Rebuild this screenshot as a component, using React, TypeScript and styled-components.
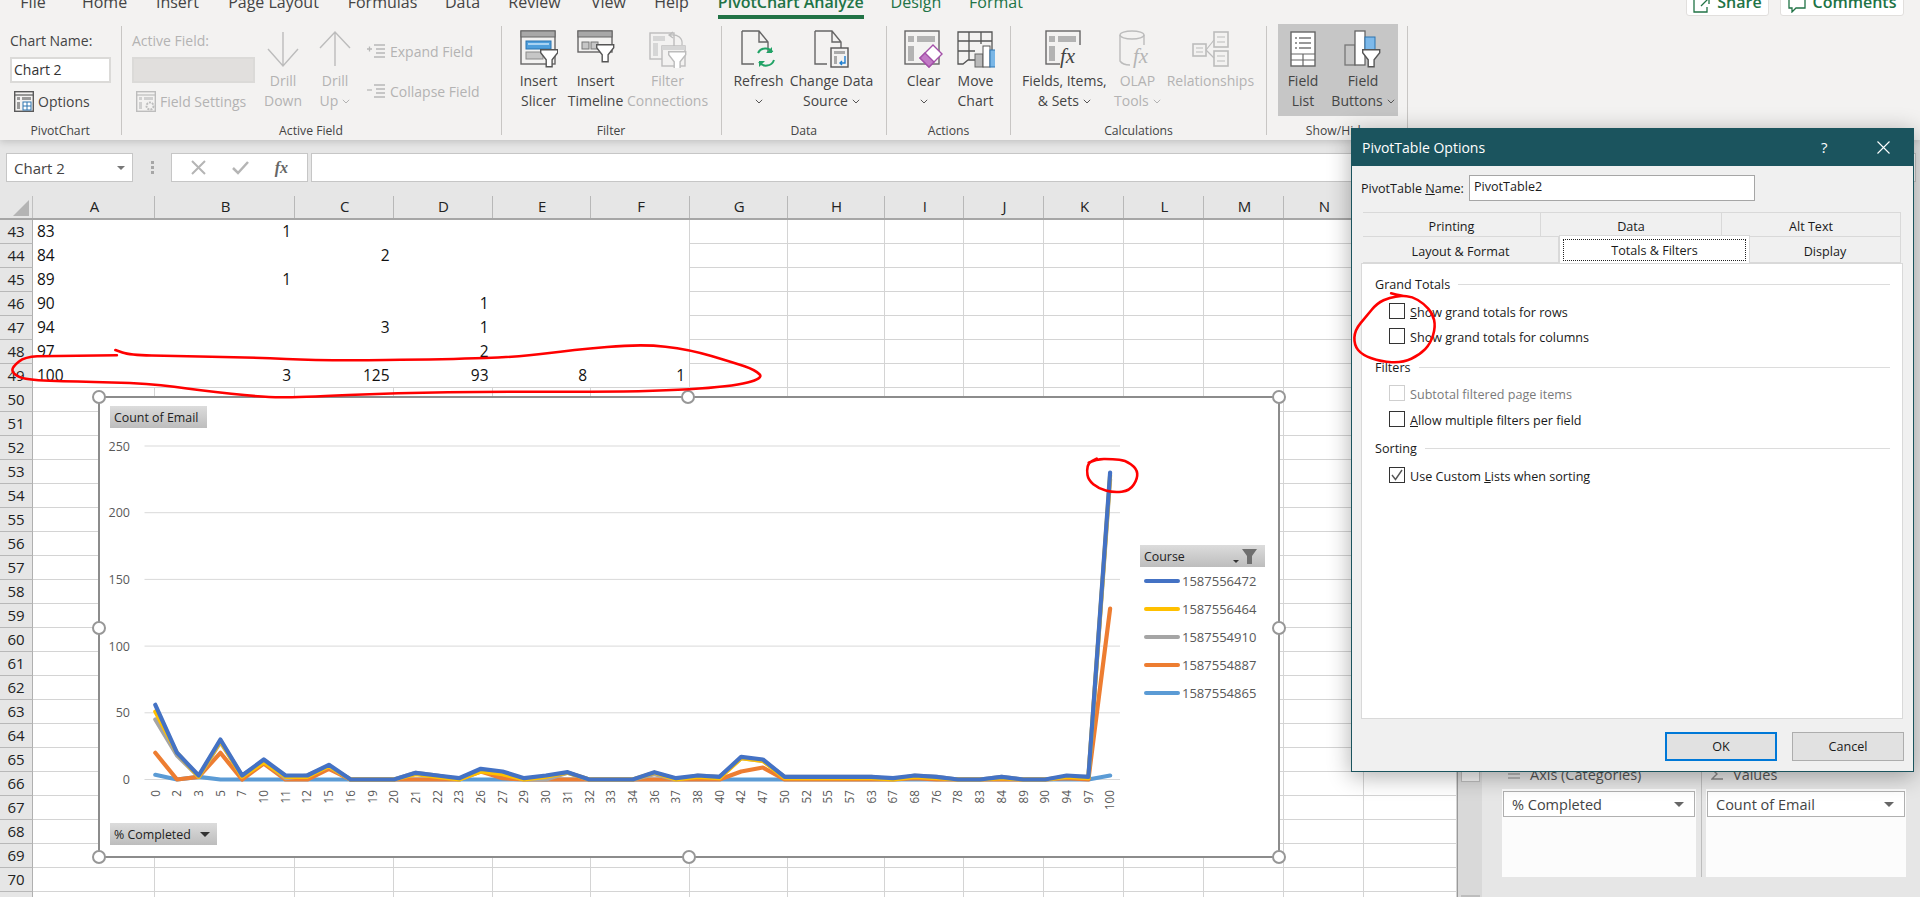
import React from "react";
import styled, { createGlobalStyle } from "styled-components";

const GlobalStyle = createGlobalStyle`
  html, body { margin: 0; padding: 0; background: #fff; overflow: hidden; }
  body { font-family: "Open Sans", "Noto Sans", "Liberation Sans", sans-serif; color: #222; }
  * { box-sizing: border-box; }
`;

const COLS = "33px 122px 140px 98.5px 99px 98.5px 99px 97.5px 97px 79.5px 80px 80px 80px 80px 80px 93px";

const Page = styled.div`
  position: relative; width: 1920px; height: 897px; overflow: hidden;
  display: flex; flex-direction: column; background: #e6e6e6;
`;

/* ---------- Ribbon ---------- */
const Ribbon = styled.header`
  height: 140px; flex: none; background: #f3f2f1; position: relative; z-index: 2;
  box-shadow: 0 2px 7px rgba(0,0,0,.16); color: #444;
`;
const TabStrip = styled.nav`
  height: 19px; margin-bottom: 7px; display: flex; align-items: flex-end; padding-left: 21px;
`;
const TabItem = styled.div<{ $w: number; $gap: number; $active?: boolean; $ctx?: boolean }>`
  width: ${(p) => p.$w}px; margin-right: ${(p) => p.$gap}px; flex: none; text-align: center;
  white-space: nowrap; font-size: 16px; line-height: 22px; padding-bottom: 2px;
  display: flex; justify-content: center;
  border-bottom: 4px solid ${(p) => (p.$active ? "#217346" : "transparent")};
  color: ${(p) => (p.$ctx || p.$active ? "#217346" : "#444")};
  font-weight: ${(p) => (p.$active ? 600 : 400)};
`;
const ShareGroup = styled.div`
  position: absolute; right: 16px; top: -14px; display: flex; gap: 11px;
`;
const ShareBtn = styled.div<{ $w: number }>`
  width: ${(p) => p.$w}px; height: 30px; background: #fff; border: 1px solid #e1dfdd; border-radius: 3px;
  color: #217346; font-size: 16px; font-weight: 600; display: flex; align-items: flex-end; justify-content: center;
  gap: 7px; line-height: 22px; padding-bottom: 2px; white-space: nowrap;
`;
const Groups = styled.div`display: flex; height: 109px;`;
const Group = styled.section<{ $w: number; $last?: boolean }>`
  width: ${(p) => p.$w}px; flex: none; height: 109px; display: flex; flex-direction: column;
  border-right: 1px solid #c8c6c4;
`;
const GroupBody = styled.div<{ $pad?: number }>`
  flex: 1; display: flex; min-height: 0; padding-left: ${(p) => p.$pad ?? 0}px;
`;
const GroupLabel = styled.div`
  height: 18px; margin-bottom: -5px; line-height: 18px; font-size: 12.2px; text-align: center; color: #444;
`;
const Stack = styled.div<{ $w?: number; $pad?: number }>`
  display: flex; flex-direction: column; padding-top: 5px; flex: none;
  ${(p) => (p.$w ? `width:${p.$w}px;` : "")} padding-left: ${(p) => p.$pad ?? 0}px;
`;
const FieldLabel = styled.div<{ $off?: boolean }>`
  font-size: 14px; line-height: 20px; color: ${(p) => (p.$off ? "#b3b3b3" : "#444")}; white-space: nowrap;
`;
const NameInput = styled.div<{ $off?: boolean; $w: number }>`
  width: ${(p) => p.$w}px; height: 26px; margin-top: 6px; border: 2px solid #dbdad8;
  background: ${(p) => (p.$off ? "#e1dfdd" : "#fff")}; font-size: 14px; line-height: 22px; padding-left: 2px; color: #333;
`;
const InlineBtn = styled.div<{ $off?: boolean; $left?: number }>`
  display: flex; align-items: center; gap: 4px; height: 20px; margin-top: 8px; margin-left: ${(p) => p.$left ?? 0}px;
  font-size: 14px; white-space: nowrap; color: ${(p) => (p.$off ? "#b3b3b3" : "#444")};
`;
const LargeBtn = styled.div<{ $w: number; $off?: boolean }>`
  width: ${(p) => p.$w}px; flex: none; display: flex; flex-direction: column; align-items: center;
  font-size: 14px; line-height: 20px; color: ${(p) => (p.$off ? "#b3b3b3" : "#444")}; white-space: nowrap;
`;
const IconSlot = styled.div`height: 45px; display: flex; align-items: center; justify-content: center; flex: none;`;
const BtnLine = styled.div`height: 20px; display: flex; align-items: center; gap: 4px;`;
const SideColumn = styled.div`
  display: flex; flex-direction: column; gap: 20px; padding: 15px 0 0 6px; font-size: 14px; color: #b3b3b3; flex: none;
`;
const SideItem = styled.div`display: flex; align-items: center; height: 20px; gap: 5px; white-space: nowrap;`;
const PressedSet = styled.div`
  display: flex; width: 120px; height: 92px; margin: -2px 0 0 11px; padding-top: 2px; background: #c6c6c6; flex: none;
`;

/* ---------- Formula bar ---------- */
const FormulaBar = styled.div`
  height: 56px; flex: none; display: flex; padding: 13px 4px 0 6px; background: #e6e6e6;
`;
const NameBox = styled.div`
  width: 127px; height: 29px; background: #fff; border: 1px solid #c6c6c6; display: flex; align-items: center;
  justify-content: space-between; padding: 0 7px; font-size: 15px; color: #444;
`;
const Grip = styled.div`
  width: 38px; height: 29px; display: flex; flex-direction: column; align-items: center; justify-content: center; gap: 2px;
  span { width: 3px; height: 3px; background: #a6a6a6; }
`;
const FxGroup = styled.div`
  width: 137px; height: 29px; background: #fff; border: 1px solid #c6c6c6; display: flex; align-items: center;
  justify-content: space-around; padding: 0 6px;
`;
const FxText = styled.span`font-family: "Liberation Serif", serif; font-style: italic; font-weight: 700; font-size: 16px; color: #666;`;
const FormulaInput = styled.div`flex: 1; height: 29px; margin-left: 3px; background: #fff; border: 1px solid #c6c6c6;`;

/* ---------- Sheet ---------- */
const Workspace = styled.div`flex: 1; min-height: 0; display: flex;`;
const Sheet = styled.div`width: 1457px; flex: none; background: #fff; overflow: hidden;`;
const HeaderRow = styled.div`
  display: grid; grid-template-columns: ${COLS}; height: 22px; background: #e6e6e6; border-bottom: 2px solid #a6a6a6; box-sizing: content-box;
`;
const Corner = styled.div`
  position: relative; border-right: 1px solid #c0c0c0;
  &::after { content: ""; position: absolute; right: 3px; bottom: 2px; border-style: solid; border-width: 0 0 16px 16px; border-color: transparent transparent #b4b4b4 transparent; }
`;
const ColHead = styled.div`
  border-right: 1px solid #b8b8b8; text-align: center; font-size: 15px; line-height: 20px; color: #222; padding-left: 2px;
`;
const SheetRow = styled.div`display: grid; grid-template-columns: ${COLS}; height: 24px;`;
const RowHead = styled.div`
  background: #e6e6e6; border-right: 1px solid #b0b0b0; border-bottom: 1px solid #b8b8b8; text-align: center;
  font-size: 15px; line-height: 22px; color: #222;
`;
const Cell = styled.div<{ $bare?: boolean; $line?: boolean; $num?: boolean; $edge?: boolean }>`
  border-right: ${(p) => (p.$bare && !p.$edge ? "none" : "1px solid #d4d4d4")};
  border-bottom: ${(p) => (p.$bare && !p.$line ? "none" : "1px solid #d4d4d4")};
  font-size: 15.5px; line-height: 22px; color: #111;
  padding: 0 4px; text-align: ${(p) => (p.$num ? "right" : "left")};
`;

/* ---------- Right side ---------- */
const ScrollTrack = styled.div`
  width: 25px; flex: none; background: #d9d9d9; border-left: 1px solid #9a9a9a;
  display: flex; flex-direction: column; align-items: center; justify-content: flex-end; padding-bottom: 0;
`;
const Thumb = styled.div<{ $h: number; $mb: number }>`
  width: 19px; height: ${(p) => p.$h}px; margin-bottom: ${(p) => p.$mb}px; background: #f4f4f4; border: 1px solid #bdbdbd; flex: none;
`;
const FieldPane = styled.aside`
  flex: 1; background: #e6e6e6; display: flex; align-items: flex-end; padding: 0 14px 20px 20px; gap: 10px;
`;
const Zone = styled.div<{ $w: number; $rule?: boolean }>`
  width: ${(p) => p.$w}px; flex: none; position: relative;
  ${(p) => (p.$rule ? "&::after{content:'';position:absolute;right:-6px;top:0;bottom:0;width:1px;background:#bdbdbd;}" : "")}
`;
const ZoneHead = styled.div`
  height: 23px; display: flex; align-items: center; gap: 9px; padding: 0 0 7px 5px; font-size: 14.5px; color: #555; white-space: nowrap;
`;
const ZoneBox = styled.div`height: 88px; background: #fcfcfc; padding: 2px 1px;`;
const PaneSelect = styled.div`
  height: 26px; border: 1px solid #b0b0b0; background: #fff; display: flex; align-items: center; justify-content: space-between;
  padding: 0 10px 0 8px; font-size: 14.5px; color: #444;
`;
const Caret = styled.span<{ $c?: string; $s?: number }>`
  width: 0; height: 0; border-style: solid; flex: none;
  border-width: ${(p) => p.$s ?? 5}px ${(p) => p.$s ?? 5}px 0 ${(p) => p.$s ?? 5}px;
  border-color: ${(p) => p.$c ?? "#666"} transparent transparent transparent;
`;

/* ---------- Chart ---------- */
const ChartFrame = styled.div`
  position: absolute; left: 98px; top: 396px; width: 1182px; height: 462px; background: #fff; border: 2px solid #8c8c8c; z-index: 1;
`;
const ChartSvg = styled.svg`
  position: absolute; left: -1px; top: -1px; width: 1180px; height: 460px;
  text { font-family: "Open Sans", sans-serif; }
`;
const PivotButton = styled.div<{ $x: number; $y: number; $w: number }>`
  position: absolute; left: ${(p) => p.$x}px; top: ${(p) => p.$y}px; width: ${(p) => p.$w}px; height: 22px;
  background: linear-gradient(#dcdcdc, #bdbdbd); display: flex; align-items: center; justify-content: space-between;
  padding: 0 7px 0 4px; font-size: 12.4px; color: #222; white-space: nowrap;
`;
const Legend = styled.div`position: absolute; left: 1040px; top: 147px; width: 125px;`;
const LegendHead = styled.div`
  height: 22px; background: linear-gradient(#dcdcdc, #bdbdbd); display: flex; align-items: center; padding: 0 4px;
  font-size: 12.4px; color: #222; justify-content: space-between;
`;
const LegendRow = styled.div`display: flex; align-items: center; height: 28px; padding-left: 4px; gap: 2px; font-size: 13px; color: #595959;`;
const Swatch = styled.span<{ $c: string }>`width: 36px; height: 4px; border-radius: 2px; background: ${(p) => p.$c}; flex: none;`;
const Handle = styled.span<{ $x: number; $y: number }>`
  position: absolute; left: ${(p) => p.$x - 7}px; top: ${(p) => p.$y - 7}px; width: 14px; height: 14px; border-radius: 50%;
  background: #fff; border: 2.5px solid #979797; z-index: 1;
`;
const RedInk = styled.svg`position: absolute; left: 0; top: 0; width: 1920px; height: 897px; pointer-events: none; z-index: 5;`;

/* ---------- Dialog ---------- */
const Dialog = styled.div`
  position: absolute; left: 1351px; top: 128px; width: 563px; height: 644px; z-index: 4; background: #f0f0f0;
  border: 1px solid #1b545e; border-top: none; box-shadow: 0 4px 22px rgba(0,0,0,.32); display: flex; flex-direction: column;
  font-size: 12.6px; color: #1a1a1a;
`;
const TitleBar = styled.div`
  height: 38px; flex: none; background: #1b545e; color: #fff; display: flex; align-items: center; padding: 0 23px 0 10px; font-size: 14px;
`;
const TitleText = styled.div`flex: 1;`;
const TitleHelp = styled.div`width: 56px; font-size: 15px;`;
const NameRow = styled.div`display: flex; align-items: center; height: 26px; margin: 9px 0 11px 9px; flex: none;`;
const NameLabel = styled.div`width: 108px; flex: none; white-space: nowrap;`;
const NameField = styled.div`
  width: 286px; height: 26px; background: #fff; border: 1px solid #a6a6a6; padding-left: 4px; line-height: 22px;
`;
const TabRow = styled.div<{ $cols: string; $h: number }>`
  display: grid; grid-template-columns: ${(p) => p.$cols}; height: ${(p) => p.$h}px; margin-left: 11px; width: 538px; flex: none;
`;
const DTab = styled.div<{ $top?: boolean }>`
  display: flex; align-items: center; justify-content: center; border-right: 1px solid #d9d9d9; padding-top: 4px;
  ${(p) => (p.$top ? "border-top: 1px solid #d9d9d9;" : "")} border-bottom: 1px solid #d9d9d9;
`;
const ActiveTab = styled.div`
  height: 28px; margin-top: -2px; position: relative; z-index: 1; background: #fff; border: 1px solid #d9d9d9; border-bottom: none;
  padding: 3px 3px 2px; display: flex;
`;
const FocusRing = styled.div`
  flex: 1; border: 1px dotted #222; display: flex; align-items: center; justify-content: center;
`;
const Panel = styled.div`
  width: 542px; height: 456px; margin-left: 9px; flex: none; background: #fff; border: 1px solid #d9d9d9; padding: 0 12px 0 13px;
`;
const SectionHead = styled.div<{ $mt: number }>`
  display: flex; align-items: center; gap: 8px; height: 18px; margin-top: ${(p) => p.$mt}px;
  &::after { content: ""; flex: 1; height: 1px; background: #dcdcdc; }
`;
const CheckRow = styled.div<{ $mt: number; $off?: boolean }>`
  display: flex; align-items: center; gap: 5px; height: 16px; margin: ${(p) => p.$mt}px 0 0 14px; white-space: nowrap;
  color: ${(p) => (p.$off ? "#7a7a7a" : "#1a1a1a")};
`;
const CheckText = styled.span`margin-top: 2px;`;
const CheckBox = styled.span<{ $off?: boolean }>`
  width: 16px; height: 16px; flex: none; border: 1px solid ${(p) => (p.$off ? "#cfcfcf" : "#333")}; background: #fff;
  display: flex; align-items: center; justify-content: center;
`;
const DialogButtons = styled.div`display: flex; justify-content: flex-end; gap: 15px; padding: 13px 9px 0 0;`;
const DButton = styled.div<{ $primary?: boolean }>`
  width: 112px; height: 29px; display: flex; align-items: center; justify-content: center; background: #e1e1e1;
  border: ${(p) => (p.$primary ? "2px solid #0078d7" : "1px solid #adadad")};
`;

/* ---------- Icon pieces ---------- */
const INK = "#666";
const OFF = "#bcbcbc";

const Chev = ({ c = "#555" }: { c?: string }) => (
  <svg width="8" height="5" viewBox="0 0 8 5"><path d="M.8.8 4 4l3.2-3.2" fill="none" stroke={c} strokeWidth="1" /></svg>
);
const Funnel = ({ x, y, c = "#555" }: { x: number; y: number; c?: string }) => (
  <path transform={`translate(${x} ${y})`} d="M.7.7h17v3l-5.6 7v7H6.2v-7L.7 3.7z" fill="#fff" stroke={c} strokeWidth="1.4" />
);
const Win = ({ c = INK, w = 34, h = 33 }: { c?: string; w?: number; h?: number }) => (
  <>
    <rect x="1" y="1" width={w} height={h} fill="none" stroke={c} strokeWidth="1.4" />
    <rect x="1" y="1" width={w} height="6" fill={c === INK ? "#a8a8a8" : "#dcdcdc"} stroke={c} strokeWidth="1" />
  </>
);
const SlicerIcon = () => (
  <svg width="38" height="38" viewBox="0 0 38 38">
    <Win />
    <rect x="6" y="11" width="25" height="8" fill="#4f9fdc" stroke="#2d74b0" />
    <rect x="8" y="13" width="21" height="2" fill="#a9d3f2" />
    <rect x="6" y="22" width="17" height="7" fill="#c6c6c6" stroke="#8a8a8a" />
    <Funnel x={20} y={19} />
  </svg>
);
const TimelineIcon = () => (
  <svg width="38" height="38" viewBox="0 0 38 38">
    <Win h={21} />
    <rect x="5" y="12" width="7" height="7" fill="#c6c6c6" stroke="#777" />
    <rect x="14" y="12" width="7" height="7" fill="#c6c6c6" stroke="#777" />
    <Funnel x={19} y={14} />
  </svg>
);
const ConnIcon = () => (
  <svg width="38" height="38" viewBox="0 0 38 38">
    <rect x="1" y="3" width="24" height="26" fill="none" stroke={OFF} strokeWidth="1.4" />
    <rect x="4" y="6" width="12" height="5" fill="#d6d6d6" />
    <rect x="4" y="13" width="5" height="13" fill="#d6d6d6" />
    <path d="M24 2l-4 3 4 3M21 5c8-1 13 3 12 10" fill="none" stroke={OFF} strokeWidth="1.3" />
    <rect x="13" y="16" width="23" height="20" fill="#f3f2f1" stroke={OFF} strokeWidth="1.4" />
    <rect x="13" y="16" width="23" height="4" fill="#d6d6d6" />
    <Funnel x={19} y={21} c={OFF} />
  </svg>
);
const DocOutline = () => (
  <path d="M1 1h17l9 11v11M13 34H1V1M18 1v11h9" fill="none" stroke={INK} strokeWidth="1.4" />
);
const RefreshIcon = () => (
  <svg width="36" height="38" viewBox="0 0 36 38">
    <DocOutline />
    <path d="M17 23a8.500 8.500 0 0 1 14.500-1M33 30a8.500 8.500 0 0 1-15 2" fill="none" stroke="#21a366" strokeWidth="2" />
    <path d="M31 17v6h-6zM18 37v-6h6z" fill="#21a366" />
  </svg>
);
const SourceIcon = () => (
  <svg width="36" height="38" viewBox="0 0 36 38">
    <DocOutline />
    <rect x="17" y="18" width="17" height="19" fill="#f3f2f1" stroke="#555" strokeWidth="1.4" />
    <rect x="20" y="21" width="11" height="3" fill="#aaa" />
    <rect x="20" y="26" width="3" height="8" fill="#aaa" />
    <path d="M31 26v7h-5m2-2-2 2 2 2" fill="none" stroke="#1f7fd0" strokeWidth="1.4" />
  </svg>
);
const ClearIcon = () => (
  <svg width="40" height="38" viewBox="0 0 40 38">
    <rect x="1" y="1" width="34" height="33" fill="none" stroke={INK} strokeWidth="1.4" />
    <rect x="4" y="6" width="6" height="6" fill="#b3b3b3" />
    <rect x="13" y="6" width="18" height="6" fill="#b3b3b3" />
    <rect x="4" y="16" width="6" height="15" fill="#b3b3b3" />
    <path d="M29 15l9 9-13 13-9-9z" fill="#fff" stroke="#a34fa8" strokeWidth="1.4" />
    <path d="M21 23l9 9-5 5-9-9z" fill="#c27ac6" stroke="#a34fa8" strokeWidth="1.4" />
  </svg>
);
const MoveIcon = () => (
  <svg width="38" height="38" viewBox="0 0 38 38">
    <path d="M1 2h34v28H11l-5 4H1zM1 11h34M1 21h17M12 2v28M24 2v12" fill="none" stroke="#555" strokeWidth="1.3" />
    <rect x="18" y="24" width="8" height="13" fill="#b9b9b9" stroke="#666" />
    <rect x="26" y="16" width="7" height="21" fill="#fff" stroke="#555" />
    <rect x="33" y="20" width="6" height="17" fill="#79b6e6" stroke="#2d74b0" />
  </svg>
);
const FieldsIcon = () => (
  <svg width="38" height="38" viewBox="0 0 38 38">
    <rect x="1" y="1" width="34" height="33" fill="none" stroke={INK} strokeWidth="1.4" />
    <rect x="4" y="6" width="6" height="6" fill="#b3b3b3" />
    <rect x="13" y="6" width="18" height="6" fill="#b3b3b3" />
    <rect x="4" y="16" width="6" height="15" fill="#b3b3b3" />
    <rect x="15" y="15" width="22" height="21" fill="#f3f2f1" />
    <text x="15" y="33" fontSize="21" fontStyle="italic" fill="#444" style={{ fontFamily: "Liberation Serif, serif" }}>fx</text>
  </svg>
);
const OlapIcon = () => (
  <svg width="38" height="38" viewBox="0 0 38 38">
    <ellipse cx="14" cy="5" rx="12" ry="4" fill="none" stroke={OFF} strokeWidth="1.4" />
    <path d="M2 5v26c2 3 6 4 10 4M26 5v10" fill="none" stroke={OFF} strokeWidth="1.4" />
    <text x="15" y="33" fontSize="21" fontStyle="italic" fill="#b5b5b5" style={{ fontFamily: "Liberation Serif, serif" }}>fx</text>
  </svg>
);
const RelIcon = () => (
  <svg width="38" height="36" viewBox="0 0 38 36">
    <rect x="2" y="13" width="13" height="12" fill="none" stroke={OFF} strokeWidth="1.6" />
    <rect x="23" y="1" width="14" height="15" fill="none" stroke={OFF} strokeWidth="1.6" />
    <rect x="23" y="20" width="14" height="15" fill="none" stroke={OFF} strokeWidth="1.6" />
    <path d="M5 17h7M5 21h7M26 6h8M26 11h8M26 25h8M26 30h8M15 19l8-10M15 19l8 8" stroke={OFF} strokeWidth="1.2" fill="none" />
  </svg>
);
const FieldListIcon = () => (
  <svg width="26" height="36" viewBox="0 0 26 36">
    <rect x="1" y="1" width="24" height="34" fill="#fff" stroke="#666" strokeWidth="1.4" />
    <path d="M5 7h2M9 7h12M5 12h2M9 12h12M5 17h2M9 17h12" stroke="#777" strokeWidth="1.3" />
    <path d="M1 23h24M1 29h24M13 23v12" stroke="#666" strokeWidth="1.2" />
  </svg>
);
const FieldBtnIcon = () => (
  <svg width="38" height="38" viewBox="0 0 38 38">
    <rect x="1" y="15" width="10" height="20" fill="none" stroke="#777" strokeWidth="1.3" />
    <rect x="11" y="1" width="10" height="34" fill="#fff" stroke="#666" strokeWidth="1.3" />
    <rect x="21" y="7" width="10" height="15" fill="#7db9ea" stroke="#2d74b0" />
    <Funnel x={18} y={19} />
  </svg>
);
const OptionsIcon = ({ off }: { off?: boolean }) => {
  const c = off ? "#bdbdbd" : "#5a5a5a";
  return (
    <svg width="20" height="21" viewBox="0 0 20 21">
      <rect x=".7" y=".7" width="18.600" height="19.600" fill="none" stroke={c} strokeWidth="1.4" />
      <path d="M.7 4h18.600" stroke={c} strokeWidth="1.2" />
      <rect x="3" y="6" width="3" height="3" fill={off ? "#d0d0d0" : "#9a9a9a"} />
      <rect x="8" y="6" width="9" height="3" fill={off ? "#d0d0d0" : "#9a9a9a"} />
      <rect x="3" y="11" width="3" height="7" fill={off ? "#d0d0d0" : "#9a9a9a"} />
      {off ? (
        <circle cx="14" cy="15" r="3.500" fill="none" stroke={c} strokeWidth="2" strokeDasharray="2 1" />
      ) : (
        <>
          <rect x="9" y="11" width="8" height="8" fill="#fff" stroke="#2d74b0" />
          <path d="M9 15h8M13 11v8" stroke="#2d74b0" />
        </>
      )}
    </svg>
  );
};
const DrillDown = () => (
  <svg width="34" height="38" viewBox="0 0 34 38"><path d="M17 2v34M2 19l15 17 15-17" fill="none" stroke={OFF} strokeWidth="1.4" /></svg>
);
const DrillUp = () => (
  <svg width="34" height="38" viewBox="0 0 34 38"><path d="M17 36V2M2 18 17 2l15 16" fill="none" stroke={OFF} strokeWidth="1.4" /></svg>
);
const TreeIcon = ({ plus }: { plus?: boolean }) => (
  <svg width="18" height="15" viewBox="0 0 18 15">
    <path d={plus ? "M0 5h5M2.500 2.500v5" : "M0 6h5"} stroke="#b8b8b8" strokeWidth="1.300" fill="none" />
    <path d="M7 1h11M9 5h9M9 9h9M7 13h11" stroke="#b8b8b8" strokeWidth="1.300" />
  </svg>
);
const ShareIcon = () => (
  <svg width="17" height="16" viewBox="0 0 17 16"><path d="M7 1H1v14h13v-5M10 1h6v6M16 1 8 9" fill="none" stroke="#217346" strokeWidth="1.300" /></svg>
);
const CommentIcon = () => (
  <svg width="18" height="16" viewBox="0 0 18 16"><path d="M1 1h16v10H8l-4 4v-4H1z" fill="none" stroke="#217346" strokeWidth="1.300" /></svg>
);
const CrossGlyph = () => (
  <svg width="15" height="15" viewBox="0 0 15 15"><path d="M1 1l13 13M14 1 1 14" stroke="#b5b5b5" strokeWidth="2" /></svg>
);
const CheckGlyph = () => (
  <svg width="17" height="15" viewBox="0 0 17 15"><path d="M1 8l5 5L16 2" fill="none" stroke="#b5b5b5" strokeWidth="2.500" /></svg>
);
const CloseGlyph = () => (
  <svg width="13" height="13" viewBox="0 0 13 13"><path d="M.5.500l12 12M12.500.500l-12 12" stroke="#fff" strokeWidth="1.100" /></svg>
);
const TickGlyph = () => (
  <svg width="12" height="12" viewBox="0 0 12 12"><path d="M1 6l3.500 4.500L11 1" fill="none" stroke="#555" strokeWidth="1.400" /></svg>
);
const LegendFilter = () => (
  <svg width="28" height="17" viewBox="0 0 28 17">
    <path d="M0 12h6l-3 3z" fill="#333" />
    <path d="M9 1h15l-5 7v8h-5V8z" fill="#6f6f6f" />
  </svg>
);

/* ---------- Data ---------- */
const TABS: [string, number, number, boolean?, boolean?][] = [
  ["File", 24, 37], ["Home", 45, 29], ["Insert", 43, 28], ["Page Layout", 93, 28], ["Formulas", 69, 28],
  ["Data", 35, 28], ["Review", 53, 30], ["View", 35, 29], ["Help", 33, 29.5],
  ["PivotChart Analyze", 146.5, 26.5, true, true], ["Design", 51, 28, false, true], ["Format", 53, 0, false, true],
];
const COL_LETTERS = "ABCDEFGHIJKLMNO".split("");
const PIVOT: Record<number, (string | number)[]> = {
  43: ["83", 1], 44: ["84", "", 2], 45: ["89", 1], 46: ["90", "", "", 1], 47: ["94", "", 3, 1],
  48: ["97", "", "", 2], 49: ["100", 3, 125, 93, 8, 1],
};
const ROWS = Array.from({ length: 29 }, (_, i) => 43 + i);
const CATS = [0,2,3,5,7,10,11,12,15,16,19,20,21,22,23,26,27,29,30,31,32,33,34,36,37,38,40,42,47,50,52,55,57,63,67,68,76,78,83,84,89,90,94,97,100];
const BLUE = [56,20,3,30,3,15,3,3,11,0,0,0,5,3,1,8,6,1,3,5.5,0,0,0,5.5,1,3,2,17,15,2,2,2,2,2,1,3,2,0,0,2,0,0,3,2,230];
const ORANGE = [20,0,2,20,0,12,0,0,8,0,0,0,0,0,0,6,1,0,0,0,0,0,0,0,0,0,0,6,9,0,0,0,0,0,0,1,0,0,0,0,0,0,1,0,128];
const SKY = [3.5,0,2,0,0,0,0,0,0,0,0,0,0,0,0,0,0,0,0,0,0,0,0,0,0,0,0,0,0,0,0,0,0,0,0,0,0,0,0,0,0,0,0,0,3];
const GRAY = [45,18,2,28,3,14,1,3,10,0,0,0,5,3,0,7,5,0,0,5,0,0,0,4,0,3,2,16,14,2,2,2,2,2,0,3,2,0,0,2,0,0,2,2,225];
const YELLOW = [51,20,2,29,2,13,2,2,10,0,0,0,4,2,0,6,4,0,2,5,0,0,0,5,0,2,1,16,14,1,1,1,1,1,0,2,1,0,0,1,0,0,2,1,228];
const SERIES: [string, number[]][] = [["#5b9bd5", SKY], ["#ed7d31", ORANGE], ["#a5a5a5", GRAY], ["#ffc000", YELLOW], ["#4472c4", BLUE]];
const LEGEND: [string, string][] = [["#4472c4", "1587556472"], ["#ffc000", "1587556464"], ["#a5a5a5", "1587554910"], ["#ed7d31", "1587554887"], ["#5b9bd5", "1587554865"]];

const catX = (i: number) => 155.3 + i * 21.7;
const valY = (v: number) => 779.5 - v * 1.334;
const linePts = (vals: number[]) => vals.map((v, i) => `${catX(i).toFixed(1)},${valY(v).toFixed(1)}`).join(" ");

const smooth = (pts: number[][], ox: number, oy: number, sx: number, sy: number) => {
  const p = pts.map(([x, y]) => [ox + x / sx, oy + y / sy]);
  let d = `M${p[0][0].toFixed(1)} ${p[0][1].toFixed(1)}`;
  for (let i = 1; i < p.length - 1; i++) {
    const mx = (p[i][0] + p[i + 1][0]) / 2;
    const my = (p[i][1] + p[i + 1][1]) / 2;
    d += `Q${p[i][0].toFixed(1)} ${p[i][1].toFixed(1)} ${mx.toFixed(1)} ${my.toFixed(1)}`;
  }
  const l = p[p.length - 1];
  return d + `L${l[0].toFixed(1)} ${l[1].toFixed(1)}`;
};
const INK_ROW = smooth(
  [[235,556],[100,558],[50,560],[25,590],[25,610],[50,630],[150,635],[300,640],[400,660],[530,682],[600,682],[800,668],[1000,665],[1300,665],[1470,650],[1535,625],[1518,600],[1475,578],[1385,538],[1290,522],[1150,540],[1050,560],[900,568],[650,572],[500,562],[350,558],[260,555],[232,540]],
  0, 170, 2.01, 3);
const INK_BOX = smooth(
  [[138,40],[165,48],[195,50],[225,70],[250,100],[258,140],[245,190],[215,225],[170,248],[110,245],[60,225],[38,195],[40,150],[70,110],[100,70],[135,52],[165,48]],
  1340, 280, 2.7, 3);
const INK_PEAK = smooth(
  [[56,38],[80,26],[130,28],[165,30],[200,55],[203,85],[180,122],[130,128],[85,115],[55,90],[50,60],[56,38],[80,26]],
  1070, 450, 3, 3);

const HANDLES: [number, number][] = [[99,397],[688,397],[1279,397],[99,628],[1279,628],[99,857],[689,857],[1279,857]];

export default function App() {
  return (
    <Page>
      <GlobalStyle />
      <Ribbon>
        <TabStrip>
          {TABS.map(([t, w, g, a, c]) => (
            <TabItem key={t} $w={w} $gap={g} $active={a} $ctx={c}>{t}</TabItem>
          ))}
        </TabStrip>
        <ShareGroup>
          <ShareBtn $w={83}><ShareIcon />Share</ShareBtn>
          <ShareBtn $w={124}><CommentIcon />Comments</ShareBtn>
        </ShareGroup>
        <Groups>
          <Group $w={121.5}>
            <GroupBody>
              <Stack $pad={10}>
                <FieldLabel>Chart Name:</FieldLabel>
                <NameInput $w={101}>Chart 2</NameInput>
                <InlineBtn $left={4}><OptionsIcon />Options</InlineBtn>
              </Stack>
            </GroupBody>
            <GroupLabel>PivotChart</GroupLabel>
          </Group>
          <Group $w={380}>
            <GroupBody $pad={10.5}>
              <Stack $w={125}>
                <FieldLabel $off>Active Field:</FieldLabel>
                <NameInput $off $w={123} />
                <InlineBtn $off $left={4}><OptionsIcon off />Field Settings</InlineBtn>
              </Stack>
              <LargeBtn $w={52} $off>
                <IconSlot><DrillDown /></IconSlot>
                <BtnLine>Drill</BtnLine>
                <BtnLine>Down</BtnLine>
              </LargeBtn>
              <LargeBtn $w={52} $off>
                <IconSlot><DrillUp /></IconSlot>
                <BtnLine>Drill</BtnLine>
                <BtnLine>Up <Chev c="#b3b3b3" /></BtnLine>
              </LargeBtn>
              <SideColumn>
                <SideItem><TreeIcon plus />Expand Field</SideItem>
                <SideItem><TreeIcon />Collapse Field</SideItem>
              </SideColumn>
            </GroupBody>
            <GroupLabel>Active Field</GroupLabel>
          </Group>
          <Group $w={220}>
            <GroupBody $pad={8}>
              <LargeBtn $w={58}><IconSlot><SlicerIcon /></IconSlot><BtnLine>Insert</BtnLine><BtnLine>Slicer</BtnLine></LargeBtn>
              <LargeBtn $w={56}><IconSlot><TimelineIcon /></IconSlot><BtnLine>Insert</BtnLine><BtnLine>Timeline</BtnLine></LargeBtn>
              <LargeBtn $w={88} $off><IconSlot><ConnIcon /></IconSlot><BtnLine>Filter</BtnLine><BtnLine>Connections</BtnLine></LargeBtn>
            </GroupBody>
            <GroupLabel>Filter</GroupLabel>
          </Group>
          <Group $w={165.5}>
            <GroupBody $pad={4}>
              <LargeBtn $w={66}><IconSlot><RefreshIcon /></IconSlot><BtnLine>Refresh</BtnLine><BtnLine><Chev /></BtnLine></LargeBtn>
              <LargeBtn $w={80}><IconSlot><SourceIcon /></IconSlot><BtnLine>Change Data</BtnLine><BtnLine>Source <Chev /></BtnLine></LargeBtn>
            </GroupBody>
            <GroupLabel>Data</GroupLabel>
          </Group>
          <Group $w={124}>
            <GroupBody $pad={10.5}>
              <LargeBtn $w={52}><IconSlot><ClearIcon /></IconSlot><BtnLine>Clear</BtnLine><BtnLine><Chev /></BtnLine></LargeBtn>
              <LargeBtn $w={52}><IconSlot><MoveIcon /></IconSlot><BtnLine>Move</BtnLine><BtnLine>Chart</BtnLine></LargeBtn>
            </GroupBody>
            <GroupLabel>Actions</GroupLabel>
          </Group>
          <Group $w={256}>
            <GroupBody $pad={3.4}>
              <LargeBtn $w={100}><IconSlot><FieldsIcon /></IconSlot><BtnLine>Fields, Items,</BtnLine><BtnLine>&amp; Sets <Chev /></BtnLine></LargeBtn>
              <LargeBtn $w={46} $off><IconSlot><OlapIcon /></IconSlot><BtnLine>OLAP</BtnLine><BtnLine>Tools <Chev c="#b3b3b3" /></BtnLine></LargeBtn>
              <LargeBtn $w={100} $off><IconSlot><RelIcon /></IconSlot><BtnLine>Relationships</BtnLine></LargeBtn>
            </GroupBody>
            <GroupLabel>Calculations</GroupLabel>
          </Group>
          <Group $w={140.5}>
            <GroupBody>
              <PressedSet>
                <LargeBtn $w={50}><IconSlot><FieldListIcon /></IconSlot><BtnLine>Field</BtnLine><BtnLine>List</BtnLine></LargeBtn>
                <LargeBtn $w={70}><IconSlot><FieldBtnIcon /></IconSlot><BtnLine>Field</BtnLine><BtnLine>Buttons <Chev /></BtnLine></LargeBtn>
              </PressedSet>
            </GroupBody>
            <GroupLabel>Show/Hide</GroupLabel>
          </Group>
        </Groups>
      </Ribbon>

      <FormulaBar>
        <NameBox>Chart 2<Caret $s={4} $c="#777" /></NameBox>
        <Grip><span /><span /><span /></Grip>
        <FxGroup><CrossGlyph /><CheckGlyph /><FxText>fx</FxText></FxGroup>
        <FormulaInput />
      </FormulaBar>

      <Workspace>
        <Sheet>
          <HeaderRow>
            <Corner />
            {COL_LETTERS.map((c) => <ColHead key={c}>{c}</ColHead>)}
          </HeaderRow>
          {ROWS.map((r) => {
            const data = PIVOT[r];
            return (
              <SheetRow key={r}>
                <RowHead>{r}</RowHead>
                {COL_LETTERS.map((c, i) => {
                  const v = data && i < 6 ? data[i] : undefined;
                  return (
                    <Cell key={c} $bare={!!data && i < 6} $edge={i === 5} $line={r === 49} $num={i > 0}>{v ?? ""}</Cell>
                  );
                })}
              </SheetRow>
            );
          })}
        </Sheet>
        <ScrollTrack>
          <Thumb $h={576} $mb={113} />
          <Thumb $h={2} $mb={0} />
        </ScrollTrack>
        <FieldPane>
          <Zone $w={194} $rule>
            <ZoneHead>
              <svg width="14" height="10" viewBox="0 0 14 10"><path d="M1 1h12M1 5h12M1 9h12" stroke="#888" strokeWidth="1.200" /></svg>
              Axis (Categories)
            </ZoneHead>
            <ZoneBox><PaneSelect>% Completed<Caret /></PaneSelect></ZoneBox>
          </Zone>
          <Zone $w={200}>
            <ZoneHead>
              <svg width="13" height="12" viewBox="0 0 13 12"><path d="M12 1H1l5 5-5 5h11" fill="none" stroke="#888" strokeWidth="1.400" /></svg>
              Values
            </ZoneHead>
            <ZoneBox><PaneSelect>Count of Email<Caret /></PaneSelect></ZoneBox>
          </Zone>
        </FieldPane>
      </Workspace>

      <ChartFrame>
        <ChartSvg viewBox="99 397 1180 460">
          {[0, 50, 100, 150, 200, 250].map((v) => (
            <g key={v}>
              <line x1="144.5" x2="1120" y1={valY(v)} y2={valY(v)} stroke="#d9d9d9" strokeWidth="1" />
              <text x="130" y={valY(v) + 4.5} textAnchor="end" fontSize="12.500" fill="#595959">{v}</text>
            </g>
          ))}
          {SERIES.map(([c, vals]) => (
            <polyline key={c} points={linePts(vals)} fill="none" stroke={c} strokeWidth="4.200" strokeLinejoin="round" strokeLinecap="round" />
          ))}
          {CATS.map((c, i) => (
            <text key={c} transform={`translate(${catX(i) + 4.2} 790) rotate(-90)`} textAnchor="end" fontSize="11.700" fill="#595959">{c}</text>
          ))}
        </ChartSvg>
        <PivotButton $x={10} $y={8} $w={97}>Count of Email</PivotButton>
        <PivotButton $x={10} $y={425} $w={107}>% Completed<Caret $s={5} $c="#333" /></PivotButton>
        <Legend>
          <LegendHead>Course<LegendFilter /></LegendHead>
          {LEGEND.map(([c, t]) => (
            <LegendRow key={t}><Swatch $c={c} />{t}</LegendRow>
          ))}
        </Legend>
      </ChartFrame>
      {HANDLES.map(([x, y]) => <Handle key={`${x}-${y}`} $x={x} $y={y} />)}

      <Dialog>
        <TitleBar>
          <TitleText>PivotTable Options</TitleText>
          <TitleHelp>?</TitleHelp>
          <CloseGlyph />
        </TitleBar>
        <NameRow>
          <NameLabel>PivotTable <u>N</u>ame:</NameLabel>
          <NameField>PivotTable2</NameField>
        </NameRow>
        <TabRow $cols="178px 181px 179px" $h={25}>
          <DTab $top>Printing</DTab>
          <DTab $top>Data</DTab>
          <DTab $top>Alt Text</DTab>
        </TabRow>
        <TabRow $cols="196px 191px 151px" $h={26}>
          <DTab>Layout &amp; Format</DTab>
          <ActiveTab><FocusRing>Totals &amp; Filters</FocusRing></ActiveTab>
          <DTab>Display</DTab>
        </TabRow>
        <Panel>
          <SectionHead $mt={11}>Grand Totals</SectionHead>
          <CheckRow $mt={10}><CheckBox /><CheckText><u>S</u>how grand totals for rows</CheckText></CheckRow>
          <CheckRow $mt={9}><CheckBox /><CheckText>Show <u>g</u>rand totals for columns</CheckText></CheckRow>
          <SectionHead $mt={14}>Filters</SectionHead>
          <CheckRow $mt={9} $off><CheckBox $off /><CheckText>Subtotal filtered page items</CheckText></CheckRow>
          <CheckRow $mt={10}><CheckBox /><CheckText><u>A</u>llow multiple filters per field</CheckText></CheckRow>
          <SectionHead $mt={12}>Sorting</SectionHead>
          <CheckRow $mt={10}><CheckBox><TickGlyph /></CheckBox><CheckText>Use Custom <u>L</u>ists when sorting</CheckText></CheckRow>
        </Panel>
        <DialogButtons>
          <DButton $primary>OK</DButton>
          <DButton>Cancel</DButton>
        </DialogButtons>
      </Dialog>

      <RedInk viewBox="0 0 1920 897">
        <path d={INK_ROW} fill="none" stroke="#f00" strokeWidth="2.600" strokeLinecap="round" />
        <path d={INK_BOX} fill="none" stroke="#f00" strokeWidth="2.600" strokeLinecap="round" />
        <path d={INK_PEAK} fill="none" stroke="#f00" strokeWidth="2.600" strokeLinecap="round" />
      </RedInk>
    </Page>
  );
}
